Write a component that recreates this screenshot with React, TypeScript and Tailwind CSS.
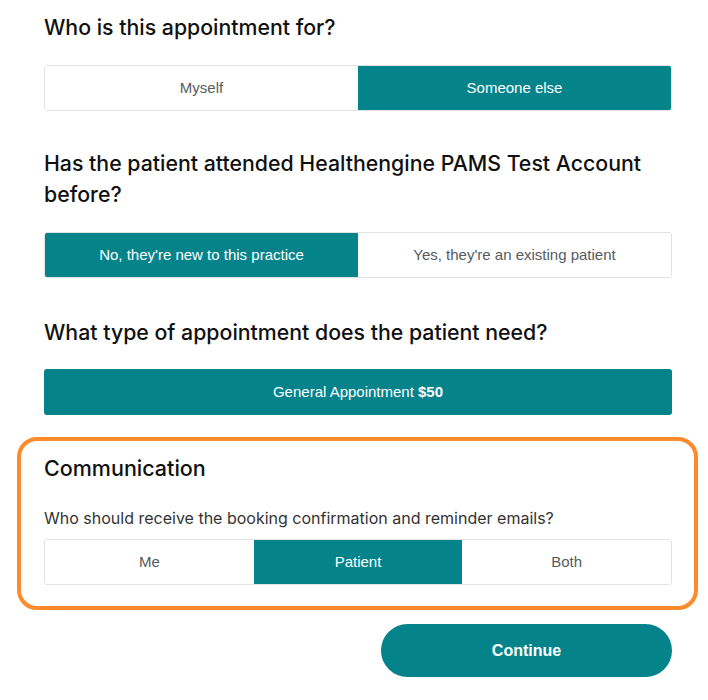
import { useState } from 'react';

const teal = 'bg-[#05838a]';

type Option = { id: string; label: React.ReactNode };

const Segmented = ({
  options,
  value,
  onChange,
}: {
  options: Option[];
  value: string;
  onChange: (v: string) => void;
}) => (
  <div className="flex h-[46px] rounded-[3px] border border-[#dfe3e3] overflow-hidden">
    {options.map((o) => (
      <button
        key={o.id}
        onClick={() => onChange(o.id)}
        className={
          'flex-1 text-[15px] ' +
          (value === o.id ? teal + ' text-white' : 'bg-white text-[#555b5e]')
        }
      >
        {o.label}
      </button>
    ))}
  </div>
);

export default function App() {
  const [who, setWho] = useState('else');
  const [attended, setAttended] = useState('new');
  const [notify, setNotify] = useState('patient');

  return (
    <div className="w-[708px] h-[700px] bg-white font-['Liberation_Sans',Arial,sans-serif]">
      <div className="pl-[44px] pr-[36px]">
        <h2 className="pt-[12px] text-[21.3px] leading-[30px] text-[#111] font-['Inter',sans-serif] font-medium">
          Who is this appointment for?
        </h2>
        <div className="mt-[23px]">
          <Segmented
            value={who}
            onChange={setWho}
            options={[
              { id: 'me', label: 'Myself' },
              { id: 'else', label: 'Someone else' },
            ]}
          />
        </div>

        <h2 className="mt-[37px] text-[21.3px] leading-[31px] text-[#111] font-['Inter',sans-serif] font-medium">
          Has the patient attended Healthengine PAMS Test Account before?
        </h2>
        <div className="mt-[22px]">
          <Segmented
            value={attended}
            onChange={setAttended}
            options={[
              { id: 'new', label: "No, they're new to this practice" },
              { id: 'existing', label: "Yes, they're an existing patient" },
            ]}
          />
        </div>

        <h2 className="mt-[39px] text-[21.3px] leading-[30px] text-[#111] font-['Inter',sans-serif] font-medium">
          What type of appointment does the patient need?
        </h2>
        <button
          className={'mt-[22px] w-full h-[46px] rounded-[3px] text-white text-[15px] ' + teal}
        >
          General Appointment <span className="font-bold">$50</span>
        </button>
      </div>

      <div className="mt-[22px] ml-[17px] mr-[10px] rounded-[20px] border-4 border-[#ff8a2b] pl-[23px] pr-[22px] pt-[13px] pb-[21px]">
        <h3 className="text-[21.5px] leading-[28px] text-[#111] font-['Inter',sans-serif] font-medium">
          Communication
        </h3>
        <p className="mt-[26px] text-[16px] leading-[20px] text-[#333] font-['Inter',sans-serif]">
          Who should receive the booking confirmation and reminder emails?
        </p>
        <div className="mt-[11px]">
          <Segmented
            value={notify}
            onChange={setNotify}
            options={[
              { id: 'me', label: 'Me' },
              { id: 'patient', label: 'Patient' },
              { id: 'both', label: 'Both' },
            ]}
          />
        </div>
      </div>

      <div className="flex justify-end pr-[36px] mt-[14px]">
        <button
          className={'w-[291px] h-[53px] rounded-full text-white text-[16px] font-bold ' + teal}
        >
          Continue
        </button>
      </div>
    </div>
  );
}
